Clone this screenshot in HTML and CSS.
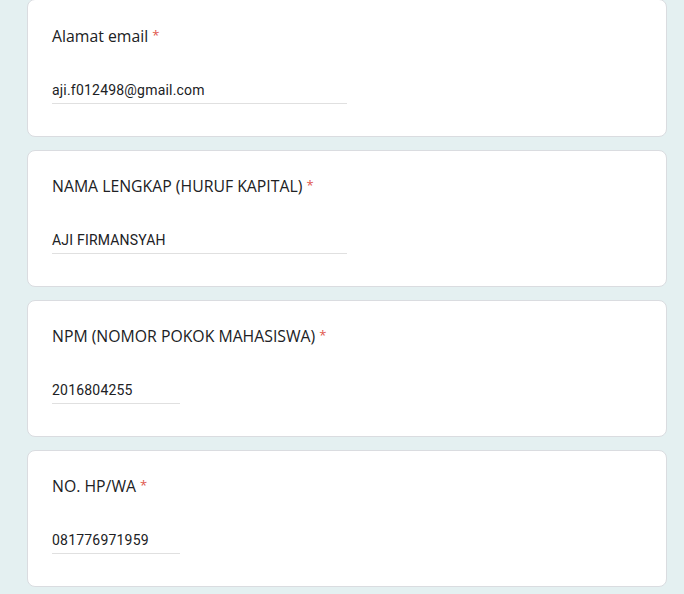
FILE: index.html
```html
<!DOCTYPE html>
<html lang="id">
<head>
<meta charset="utf-8">
<title>Form</title>
<link rel="stylesheet" href="styles.css">
</head>
<body>
<div class="form">
  <div class="card">
    <div class="label">Alamat email <span class="req">*</span></div>
    <div class="answer wide">aji.f012498@gmail.com</div>
  </div>
  <div class="card">
    <div class="label">NAMA LENGKAP (HURUF KAPITAL) <span class="req">*</span></div>
    <div class="answer wide">AJI FIRMANSYAH</div>
  </div>
  <div class="card">
    <div class="label">NPM (NOMOR POKOK MAHASISWA) <span class="req">*</span></div>
    <div class="answer narrow">2016804255</div>
  </div>
  <div class="card">
    <div class="label">NO. HP/WA <span class="req">*</span></div>
    <div class="answer narrow">081776971959</div>
  </div>
</div>
</body>
</html>
```
FILE: styles.css
```css
html, body {
  margin: 0;
  padding: 0;
  background: #e4f0f1;
}
.form {
  display: flex;
  flex-direction: column;
  gap: 13px;
  width: 640px;
  margin-left: 27px;
  margin-top: -1px;
}
.card {
  box-sizing: border-box;
  height: 137px;
  background: #ffffff;
  border: 1px solid #dadce0;
  border-radius: 8px;
  padding: 22px 24px 24px;
}
.form .card:first-child {
  height: 138px;
  padding-top: 23px;
}
.label {
  font-family: "Open Sans", Roboto, sans-serif;
  font-size: 15.8px;
  line-height: 24px;
  color: #202124;
}
.req {
  color: #e0574d;
  font-size: 13px;
  vertical-align: 2px;
}
.answer {
  margin-top: 32px;
  font-family: Roboto, Arial, sans-serif;
  font-size: 14px;
  line-height: 20px;
  color: #202124;
  letter-spacing: 0.2px;
  padding-bottom: 3px;
  border-bottom: 1px solid #e0e0e0;
}
.wide { width: 295px; }
.narrow { width: 128px; }
```
